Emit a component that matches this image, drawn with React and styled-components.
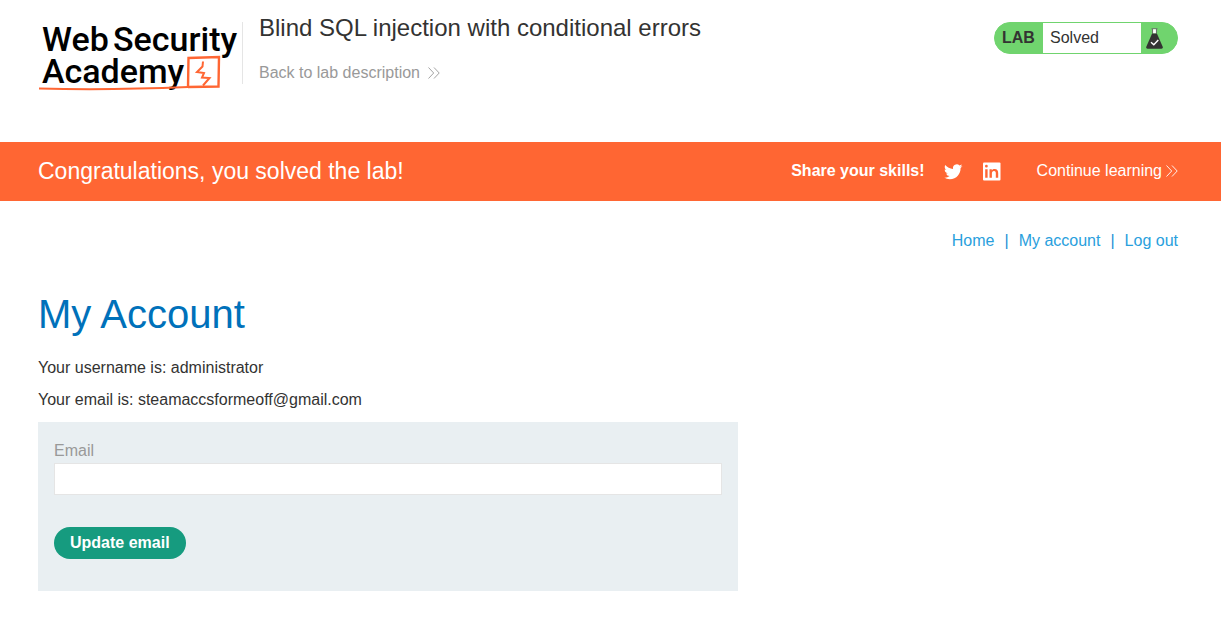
import React from 'react';
import styled, { createGlobalStyle } from 'styled-components';

const GlobalStyle = createGlobalStyle`
  * { box-sizing: border-box; }
  body {
    margin: 0;
    background: #fff;
    color: #333332;
    font: 16px/20px "Liberation Sans", Arial, Helvetica, sans-serif;
  }
`;

const Gutter = styled.div`
  padding: 0 43px 0 38px;
`;

const Header = styled(Gutter)`
  display: flex;
  align-items: flex-start;
  padding-top: 12px;
  padding-bottom: 48px;
`;

const LogoLink = styled.a`
  display: block;
  flex: none;
  margin-top: 10px;
  padding-right: 2px;
  border-right: 1px solid #e5e5e5;
  height: 62px;
  svg { display: block; overflow: visible; }
`;

const Titles = styled.div`
  flex: 1;
  padding-left: 16px;
`;

const LabTitle = styled.h2`
  margin: 0 0 18px;
  font-size: 24px;
  line-height: 32px;
  font-weight: 400;
`;

const BackLink = styled.a`
  display: flex;
  width: fit-content;
  align-items: center;
  gap: 8px;
  padding-top: 1px;
  padding-bottom: 11px;
  color: #999;
  text-decoration: none;
`;

const Badge = styled.div`
  display: flex;
  align-items: stretch;
  flex: none;
  width: 184px;
  height: 32px;
  margin-top: 10px;
  border: 1px solid #70d46e;
  border-radius: 16px;
  overflow: hidden;
  background: #70d46e;
  line-height: 30px;
`;

const BadgeLabel = styled.span`
  width: 48px;
  padding-left: 7px;
  font-weight: 700;
`;

const BadgeStatus = styled.span`
  flex: 1;
  padding-left: 7px;
  background: #fff;
`;

const BadgeIcon = styled.span`
  display: flex;
  align-items: center;
  width: 36px;
  padding-left: 5px;
`;

const Banner = styled(Gutter)`
  display: flex;
  align-items: center;
  height: 59px;
  padding-bottom: 2px;
  background: #ff6633;
  color: #fff;
`;

const Congrats = styled.h4`
  flex: 1;
  margin: 0;
  font-size: 23px;
  font-weight: 400;
`;

const Share = styled.span`
  margin-right: 19px;
  font-weight: 700;
`;

const SocialLink = styled.a`
  display: block;
  width: 20px;
  height: 20px;
  margin-right: 18px;
  color: #fff;
  svg { display: block; }
`;

const ContinueLink = styled.a`
  display: inline-flex;
  align-items: center;
  gap: 4px;
  margin-left: 17px;
  color: #fff;
  text-decoration: none;
`;

const Nav = styled.nav`
  display: flex;
  justify-content: flex-end;
  gap: 10px;
  padding: 30px 0 37px;
  color: #1d8fd6;
`;

const NavLink = styled.a`
  color: #29a0dd;
  text-decoration: none;
`;

const PageTitle = styled.h1`
  margin: 0 0 18px;
  color: #0071ba;
  font-size: 40px;
  line-height: 52px;
  font-weight: 400;
`;

const Line = styled.p`
  margin: 0 0 12px;
`;

const Form = styled.form`
  display: flex;
  flex-direction: column;
  align-items: flex-start;
  max-width: 700px;
  padding: 19px 16px 32px;
  background: #e9eff2;
`;

const Label = styled.label`
  margin-bottom: 2px;
  color: #999;
`;

const Input = styled.input`
  width: 100%;
  height: 32px;
  margin-bottom: 32px;
  padding: 0 8px;
  border: 1px solid #e5e5e5;
  background: #fff;
  font: inherit;
  color: inherit;
`;

const Button = styled.button`
  height: 32px;
  padding: 0 16px;
  border: 0;
  border-radius: 16px;
  background: #169b7f;
  color: #fff;
  font: inherit;
  font-weight: 700;
`;

const Chevrons = () => (
  <svg width="12" height="12" viewBox="0 0 12 12" fill="none" stroke="currentColor" strokeWidth="0.9" aria-hidden="true">
    <path d="M0.5 0.5 5.7 6 0.5 11.5M6 0.5 11.2 6 6 11.5" />
  </svg>
);

const Logo = () => (
  <svg width="202" height="70" viewBox="0 0 202 70" role="img" aria-label="Web Security Academy">
    <g fill="#000" fontFamily="Roboto, sans-serif" fontWeight="500" fontSize="34">
      <text x="4" y="29">Web</text>
      <text x="75" y="29">Security</text>
      <text x="4" y="61">Academy</text>
    </g>
    <g fill="none" stroke="#ff6633">
      <path d="M1 66.500 C40 67.500 90 67.500 150 65" strokeWidth="2" />
      <path d="M150 66 150.500 36 181 35 180.500 64.500 150 65" strokeWidth="2.400" />
      <path d="M165 39.500 164.500 44.500 159 50 166 51 164 55.500 171.500 56 165 63.500" strokeWidth="2" />
    </g>
  </svg>
);

const Flask = () => (
  <svg width="17" height="21" viewBox="0 0 17 21" aria-hidden="true">
    <path d="M5.500.8h6M6.600 1v4.500M10.400 1v4.500" stroke="#6b6b6b" strokeWidth="1" fill="none" />
    <path d="M7.100 1.300h2.800v4.200H7.100z" fill="#fff" />
    <path d="M6.100 5.500h4.800l5.900 13.500q.4 1.700-1.300 1.700h-14Q-.2 20.700.2 19z" fill="#333332" />
    <path d="m5 14.300 2.800 2.500 4.500-4.800" stroke="#fff" strokeWidth="1.400" fill="none" />
  </svg>
);

const Twitter = () => (
  <svg width="20" height="20" viewBox="0 -2 26 26" fill="currentColor" aria-hidden="true">
    <path d="M23.950 4.570a10 10 0 0 1-2.820.77 4.960 4.960 0 0 0 2.160-2.720c-.95.550-2 .950-3.130 1.180a4.920 4.920 0 0 0-8.380 4.480C7.690 8.100 4.070 6.130 1.640 3.160a4.820 4.820 0 0 0-.67 2.480c0 1.710.870 3.210 2.190 4.100a4.900 4.900 0 0 1-2.230-.62v.06a4.920 4.920 0 0 0 3.950 4.830 5 5 0 0 1-2.210.08 4.940 4.940 0 0 0 4.600 3.420A9.870 9.870 0 0 1 0 19.540a14 14 0 0 0 7.550 2.210c9.050 0 14-7.500 14-13.980 0-.21 0-.42-.02-.63a9.940 9.940 0 0 0 2.460-2.550z" />
  </svg>
);

const LinkedIn = () => (
  <svg width="20" height="20" viewBox="0 0 20 20" aria-hidden="true">
    <rect x="1" y="1.500" width="17.500" height="18" rx="1" fill="#fff" />
    <path fill="#ff6633" d="M3.200 8.200h2.400v8.600H3.200zM3 5.200a1.400 1.400 0 1 1 2.800 0 1.400 1.400 0 0 1-2.800 0zM7.500 8.200h2.300v1.200c.4-.8 1.300-1.400 2.700-1.400 2.900 0 3.700 1.700 3.700 4.300v4.500h-2.400v-4.200c0-1.500-.3-2.500-1.800-2.500s-2.100 1-2.100 2.400v4.300H7.500z" />
  </svg>
);

export default function App() {
  return (
    <>
      <GlobalStyle />
      <Header as="header">
        <LogoLink href="#home"><Logo /></LogoLink>
        <Titles>
          <LabTitle>Blind SQL injection with conditional errors</LabTitle>
          <BackLink href="#lab">Back to lab description <Chevrons /></BackLink>
        </Titles>
        <Badge>
          <BadgeLabel>LAB</BadgeLabel>
          <BadgeStatus>Solved</BadgeStatus>
          <BadgeIcon><Flask /></BadgeIcon>
        </Badge>
      </Header>
      <Banner as="section">
        <Congrats>Congratulations, you solved the lab!</Congrats>
        <Share>Share your skills!</Share>
        <SocialLink href="#twitter" aria-label="Twitter"><Twitter /></SocialLink>
        <SocialLink href="#linkedin" aria-label="LinkedIn"><LinkedIn /></SocialLink>
        <ContinueLink href="#learning">Continue learning <Chevrons /></ContinueLink>
      </Banner>
      <Gutter as="main">
        <Nav>
          <NavLink href="#home">Home</NavLink>
          <span>|</span>
          <NavLink href="#account">My account</NavLink>
          <span>|</span>
          <NavLink href="#logout">Log out</NavLink>
        </Nav>
        <PageTitle>My Account</PageTitle>
        <Line>Your username is: administrator</Line>
        <Line>Your email is: steamaccsformeoff@gmail.com</Line>
        <Form onSubmit={(e) => e.preventDefault()}>
          <Label htmlFor="email">Email</Label>
          <Input id="email" type="email" />
          <Button type="submit">Update email</Button>
        </Form>
      </Gutter>
    </>
  );
}
